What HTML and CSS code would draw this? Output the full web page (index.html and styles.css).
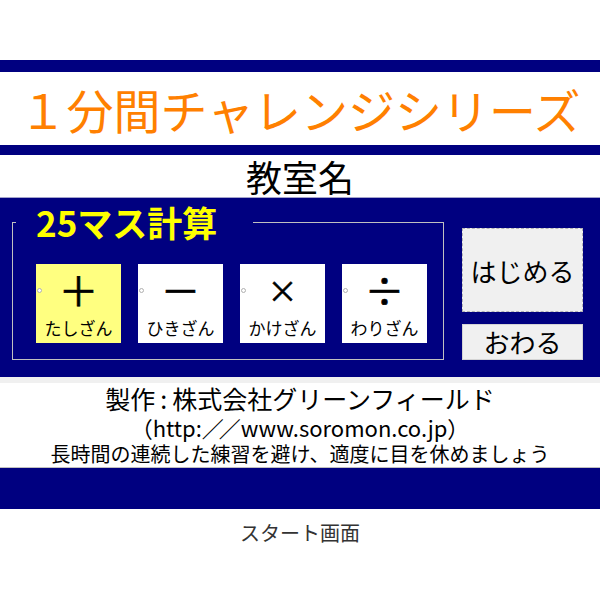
FILE: index.html
```html
<!DOCTYPE html>
<html lang="ja">
<head>
<meta charset="utf-8">
<title>スタート画面</title>
<link rel="stylesheet" href="styles.css">
</head>
<body>
<div class="page">
  <div class="top-space"></div>
  <div class="bar bar-top"></div>
  <h1 class="title">１分間チャレンジシリーズ</h1>
  <div class="bar bar-mid"></div>
  <div class="room">教室名</div>
  <div class="panel">
    <fieldset class="group">
      <legend class="legend">25マス計算</legend>
      <div class="ops">
        <button class="op op-active"><span class="dot"></span><span class="sym">＋</span><span class="lbl">たしざん</span></button>
        <button class="op"><span class="dot"></span><span class="sym">－</span><span class="lbl">ひきざん</span></button>
        <button class="op"><span class="dot"></span><span class="sym sym-times">×</span><span class="lbl">かけざん</span></button>
        <button class="op"><span class="dot"></span><span class="sym">÷</span><span class="lbl">わりざん</span></button>
      </div>
    </fieldset>
    <div class="actions">
      <button class="btn btn-start">はじめる</button>
      <button class="btn btn-end">おわる</button>
    </div>
  </div>
  <div class="gray-band"></div>
  <div class="credits">
    <div class="credit-1">製作<span class="colon">:</span>株式会社グリーンフィールド</div>
    <div class="credit-2">（http:<span class="slashes">／／</span>www.soromon.co.jp）</div>
    <div class="credit-3">長時間の連続した練習を避け、適度に目を休めましょう</div>
  </div>
  <div class="bar bar-bottom"></div>
  <div class="caption">スタート画面</div>
</div>
</body>
</html>
```

FILE: styles.css
```css
html, body {
  margin: 0;
  padding: 0;
  background: #ffffff;
}

body {
  font-family: "Noto Sans CJK JP", "Noto Sans", sans-serif;
  color: #000000;
}

.page {
  width: 600px;
}

.top-space {
  height: 60px;
}

.bar {
  background: #000080;
}

.bar-top {
  height: 12px;
}

.bar-mid {
  height: 10px;
}

.title {
  margin: 0;
  height: 73px;
  line-height: 73px;
  font-size: 47px;
  font-weight: normal;
  color: #ff8000;
  text-align: center;
  white-space: nowrap;
}

.room {
  height: 42px;
  line-height: 42px;
  font-size: 36px;
  text-align: center;
}

.panel {
  box-sizing: border-box;
  height: 180px;
  border-top: 1px solid #a4a4cc;
  background: #000080;
  display: flex;
  align-items: flex-start;
  padding: 7px 0 0 12px;
}

.group {
  margin: 0;
  padding: 25px 16px 16px 23px;
  border: 1px solid #c0c0c0;
  min-inline-size: 0;
}

.legend {
  box-sizing: border-box;
  width: 237px;
  margin-left: -20px;
  padding: 0 0 0 20px;
  height: 34px;
  line-height: 34px;
  font-size: 35px;
  font-weight: bold;
  color: #ffff00;
  white-space: nowrap;
}

.ops {
  display: flex;
  gap: 17px;
}

.op {
  position: relative;
  width: 85px;
  height: 79px;
  margin: 0;
  padding: 5px 0 0 0;
  border: none;
  background: #ffffff;
  display: flex;
  flex-direction: column;
  align-items: center;
  font-family: "Noto Sans CJK JP", sans-serif;
  color: #000000;
  box-sizing: border-box;
}

.op-active {
  background: #ffff80;
}

.dot {
  position: absolute;
  left: 1px;
  top: 24px;
  width: 3px;
  height: 3px;
  border: 1px solid #b0b0b0;
  border-radius: 50%;
  background: #ffffff;
}

.sym {
  display: block;
  height: 40px;
  line-height: 40px;
  font-size: 40px;
  -webkit-text-stroke: 0.6px #000000;
}

.sym-times {
  font-size: 30px;
}

.lbl {
  display: block;
  margin-top: 8px;
  height: 22px;
  line-height: 22px;
  font-size: 17px;
  white-space: nowrap;
}

.actions {
  margin-left: 18px;
  margin-top: 23px;
  display: flex;
  flex-direction: column;
  gap: 12px;
}

.btn {
  box-sizing: border-box;
  width: 121px;
  margin: 0;
  padding: 0;
  background: #f0f0f0;
  font-family: "Noto Sans CJK JP", sans-serif;
  font-size: 26px;
  color: #000000;
  white-space: nowrap;
}

.btn-start {
  height: 84px;
  border: 1px dashed #b4b4b4;
}

.btn-end {
  height: 36px;
  line-height: 34px;
  border: 1px solid #d4d4d4;
}

.gray-band {
  height: 6px;
  background: #f0f0f0;
}

.credits {
  text-align: center;
  white-space: nowrap;
  border-bottom: 1px solid #c0c0c0;
}

.credit-1 {
  height: 31px;
  line-height: 31px;
  font-size: 25px;
}

.colon {
  padding: 0 5px;
}

.credit-2 {
  height: 27px;
  line-height: 27px;
  font-size: 22px;
}

.slashes {
  letter-spacing: -5px;
  padding-right: 5px;
}

.credit-3 {
  height: 26px;
  line-height: 26px;
  font-size: 20px;
}

.bar-bottom {
  height: 41px;
}

.caption {
  height: 48px;
  line-height: 48px;
  font-size: 20px;
  color: #333333;
  text-align: center;
}
```
